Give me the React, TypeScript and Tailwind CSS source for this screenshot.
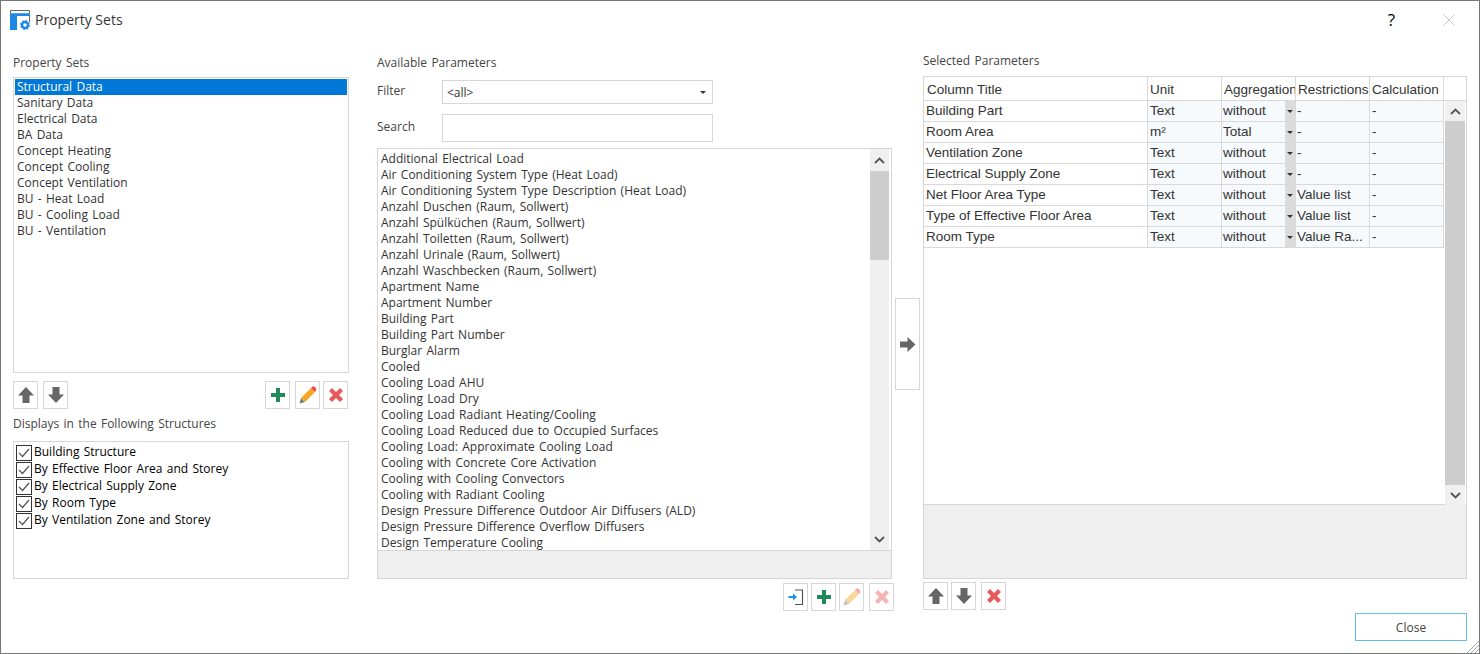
import type { ReactNode } from "react"

const propertySets = [
  "Sanitary Data",
  "Electrical Data",
  "BA Data",
  "Concept Heating",
  "Concept Cooling",
  "Concept Ventilation",
  "BU - Heat Load",
  "BU - Cooling Load",
  "BU - Ventilation",
]

const structures = [
  "Building Structure",
  "By Effective Floor Area and Storey",
  "By Electrical Supply Zone",
  "By Room Type",
  "By Ventilation Zone and Storey",
]

const parameters = [
  "Additional Electrical Load",
  "Air Conditioning System Type (Heat Load)",
  "Air Conditioning System Type Description (Heat Load)",
  "Anzahl Duschen (Raum, Sollwert)",
  "Anzahl Spülküchen (Raum, Sollwert)",
  "Anzahl Toiletten (Raum, Sollwert)",
  "Anzahl Urinale (Raum, Sollwert)",
  "Anzahl Waschbecken (Raum, Sollwert)",
  "Apartment Name",
  "Apartment Number",
  "Building Part",
  "Building Part Number",
  "Burglar Alarm",
  "Cooled",
  "Cooling Load AHU",
  "Cooling Load Dry",
  "Cooling Load Radiant Heating/Cooling",
  "Cooling Load Reduced due to Occupied Surfaces",
  "Cooling Load: Approximate Cooling Load",
  "Cooling with Concrete Core Activation",
  "Cooling with Cooling Convectors",
  "Cooling with Radiant Cooling",
  "Design Pressure Difference Outdoor Air Diffusers (ALD)",
  "Design Pressure Difference Overflow Diffusers",
  "Design Temperature Cooling",
]

const rows = [
  ["Building Part", "Text", "without", "-"],
  ["Room Area", "m²", "Total", "-"],
  ["Ventilation Zone", "Text", "without", "-"],
  ["Electrical Supply Zone", "Text", "without", "-"],
  ["Net Floor Area Type", "Text", "without", "Value list"],
  ["Type of Effective Floor Area", "Text", "without", "Value list"],
  ["Room Type", "Text", "without", "Value Ra..."],
]

const ArrowUp = () => (
  <svg width="20" height="20" viewBox="0 0 20 20">
    <path d="M10 2 L18 10.5 H13.5 V18 H6.5 V10.5 H2 Z" fill="#666" />
  </svg>
)

const ArrowDown = () => (
  <svg width="20" height="20" viewBox="0 0 20 20">
    <path d="M10 18 L18 9.5 H13.5 V2 H6.5 V9.5 H2 Z" fill="#666" />
  </svg>
)

const Plus = () => (
  <svg width="16" height="16" viewBox="0 0 16 16">
    <path d="M6 1 H10 V6 H15 V10 H10 V15 H6 V10 H1 V6 H6 Z" fill="#1f8a5a" />
  </svg>
)

const Cross = () => (
  <svg width="16" height="16" viewBox="0 0 16 16">
    <path d="M1 4 L4 1 L8 5 L12 1 L15 4 L11 8 L15 12 L12 15 L8 11 L4 15 L1 12 L5 8 Z" fill="#e85a5a" />
  </svg>
)

const Pencil = () => (
  <svg width="18" height="18" viewBox="0 0 18 18">
    <path d="M0.5 17.5 L2 12 L6 16 Z" fill="#777" />
    <path d="M2 12 L12 2 L16 6 L6 16 Z" fill="#f5a623" />
    <path d="M12 2 L13.5 0.5 Q14.5 0 15.5 0.8 L17 2.4 Q17.6 3.4 17 4.4 L16 6 Z" fill="#f0434f" />
  </svg>
)

const Insert = () => (
  <svg width="18" height="18" viewBox="0 0 18 18">
    <path d="M8 2 H15.5 V16.5 H8" fill="none" stroke="#555" strokeWidth="1.2" />
    <path d="M1.5 8 H6 V5.5 L10 9 L6 12.5 V10 H1.5 Z" fill="#1e90e8" />
  </svg>
)

const Chevron = ({ up }: { up?: boolean }) => (
  <svg width="11" height="7" viewBox="0 0 11 7">
    <path d={up ? "M1 6 L5.5 1.5 L10 6" : "M1 1 L5.5 5.5 L10 1"} fill="none" stroke="#555" strokeWidth="1.8" />
  </svg>
)

const Caret = () => (
  <svg width="6" height="3" viewBox="0 0 6 3">
    <path d="M0 0 H6 L3 3 Z" fill="#333" />
  </svg>
)

const IconButton = ({ children, faded }: { children: ReactNode; faded?: boolean }) => (
  <button className={`flex h-[28px] w-[25px] shrink-0 items-center justify-center border border-[#d6d6d6] bg-white ${faded ? "[&>svg]:opacity-45" : ""}`}>
    {children}
  </button>
)

const Scrollbar = ({ arrow, thumbHeight, width }: { arrow: string; thumbHeight: string; width: string }) => (
  <div className={`flex h-full shrink-0 flex-col ${width}`}>
    <div className={`flex shrink-0 items-center justify-center bg-[#f0f0f0] ${arrow}`}>
      <Chevron up />
    </div>
    <div className="flex flex-1 flex-col bg-[#f0f0f0]">
      <div className={`bg-[#cdcdcd] ${thumbHeight}`} />
    </div>
    <div className={`flex shrink-0 items-center justify-center bg-[#f0f0f0] ${arrow}`}>
      <Chevron />
    </div>
  </div>
)

function PropertySetsColumn() {
  return (
    <div className="flex w-[336px] shrink-0 flex-col">
      <div className="h-[22px] text-[12px] leading-[16px] text-[#444]">Property Sets</div>
      <div className="h-[296px] border border-[#d6d6d6] bg-white p-px">
        <div className="h-[16px] bg-[#0078d7] pl-[2px] text-[12px] leading-[16px] text-white">Structural Data</div>
        {propertySets.map((s) => (
          <div key={s} className="h-[16px] pl-[2px] text-[12px] leading-[16px] text-[#333]">
            {s}
          </div>
        ))}
      </div>
      <div className="mt-[8px] flex h-[28px]">
        <IconButton><ArrowUp /></IconButton>
        <div className="ml-[5px]"><IconButton><ArrowDown /></IconButton></div>
        <div className="ml-[197px]"><IconButton><Plus /></IconButton></div>
        <div className="ml-[5px]"><IconButton><Pencil /></IconButton></div>
        <div className="ml-[3px]"><IconButton><Cross /></IconButton></div>
      </div>
      <div className="mt-[7px] h-[25px] text-[12px] leading-[16px] text-[#444]">Displays in the Following Structures</div>
      <div className="h-[138px] border border-[#d6d6d6] bg-white pt-[2px] pl-[2px]">
        {structures.map((s) => (
          <div key={s} className="flex h-[17px] items-center gap-[2px] text-[12px] text-black">
            <span className="flex h-[16px] w-[16px] items-center justify-center border border-[#333]">
              <svg width="12" height="10" viewBox="0 0 12 10">
                <path d="M1 5 L4.5 8.5 L11 1" fill="none" stroke="#555" strokeWidth="1.2" />
              </svg>
            </span>
            <span className="-mt-[2px]">{s}</span>
          </div>
        ))}
      </div>
    </div>
  )
}

function AvailableColumn() {
  return (
    <div className="flex w-[515px] shrink-0 flex-col">
      <div className="h-[25px] text-[12px] leading-[16px] text-[#444]">Available Parameters</div>
      <div className="flex h-[24px] items-start">
        <span className="w-[65px] text-[12px] leading-[22px] text-[#444]">Filter</span>
        <div className="flex h-[24px] w-[271px] items-center justify-between border border-[#d6d6d6] pt-[2px] pr-[6px] pl-[4px] text-[12px] text-[#333]">
          &lt;all&gt;
          <span className="-mt-[2px] flex"><Caret /></span>
        </div>
      </div>
      <div className="mt-[10px] flex h-[28px] items-start">
        <span className="w-[65px] text-[12px] leading-[26px] text-[#444]">Search</span>
        <div className="h-[28px] w-[271px] border border-[#d6d6d6]" />
      </div>
      <div className="mt-[6px] flex h-[403px] border border-[#d6d6d6] bg-white">
        <div className="min-w-0 flex-1 overflow-hidden pt-[2px] pl-[3px]">
          {parameters.map((p) => (
            <div key={p} className="h-[16px] whitespace-nowrap text-[12px] leading-[16px] text-[#333]">
              {p}
            </div>
          ))}
        </div>
        <Scrollbar width="w-[19px] mr-[2px]" arrow="h-[22px]" thumbHeight="h-[89px]" />
      </div>
      <div className="h-[28px] border-x border-b border-[#d6d6d6] bg-[#efefef]" />
      <div className="mt-[4px] -mr-[2px] flex h-[28px] justify-end">
        <IconButton><Insert /></IconButton>
        <div className="ml-[3px]"><IconButton><Plus /></IconButton></div>
        <div className="ml-[3px]"><IconButton faded><Pencil /></IconButton></div>
        <div className="ml-[5px]"><IconButton faded><Cross /></IconButton></div>
      </div>
    </div>
  )
}

function SelectedColumn() {
  const cell = "flex items-center border-r border-[#d9d9d9] px-[2px] overflow-hidden whitespace-nowrap"
  return (
    <div className="flex w-[544px] shrink-0 flex-col">
      <div className="h-[22px] text-[12px] leading-[14px] text-[#444]">Selected Parameters</div>
      <div className="flex h-[429px] flex-col border border-[#d6d6d6] bg-white font-['Liberation_Sans',sans-serif] text-[13.5px] text-[#333] [word-spacing:0]">
        <div className="grid h-[24px] shrink-0 grid-cols-[224px_74px_74px_74px_74px_1fr] border-b border-[#d9d9d9]">
          {["Column Title", "Unit", "Aggregation", "Restrictions", "Calculation"].map((h, i) => (
            <div key={h} className={`${cell} pt-[4px] ${i === 0 ? "pl-[3px]" : ""}`}>{h}</div>
          ))}
        </div>
        <div className="flex min-h-0 flex-1">
          <div className="w-[520px] shrink-0">
            {rows.map((r) => (
              <div key={r[0]} className="grid h-[21px] grid-cols-[224px_74px_74px_74px_74px] border-b border-[#d9d9d9]">
                <div className={cell}>{r[0]}</div>
                <div className={`${cell} bg-[#f6fafd]`}>{r[1]}</div>
                <div className="flex items-center justify-between border-r border-[#d9d9d9] bg-[#f6fafd] pl-[1px]">
                  <span>{r[2]}</span>
                  <span className="flex h-full w-[10px] items-center justify-center bg-[#dcdcdc]"><Caret /></span>
                </div>
                <div className={`${cell} bg-[#f6fafd] pl-[1px]`}>{r[3]}</div>
                <div className={`${cell} bg-[#f6fafd]`}>-</div>
              </div>
            ))}
          </div>
          <Scrollbar width="w-[20px] ml-[1px]" arrow="h-[20px]" thumbHeight="h-[364px]" />
        </div>
      </div>
      <div className="h-[74px] border-x border-b border-[#d6d6d6] bg-[#efefef]" />
      <div className="mt-[3px] flex h-[28px]">
        <IconButton><ArrowUp /></IconButton>
        <div className="ml-[3px]"><IconButton><ArrowDown /></IconButton></div>
        <div className="ml-[5px]"><IconButton><Cross /></IconButton></div>
      </div>
    </div>
  )
}

export default function App() {
  return (
    <div className="relative flex h-[654px] w-[1480px] flex-col overflow-hidden border border-[#777] bg-white font-['Open_Sans',sans-serif] [word-spacing:1.2px]">
      <div className="flex h-[37px] shrink-0 items-center pl-[9px] [word-spacing:0]">
        <svg width="20" height="20" viewBox="0 0 20 20">
          <path d="M0.5 0.5 H19.5 V12" fill="none" stroke="#666" />
          <path d="M0 0 V20 H10 V6 H20 V3.5 H0 Z" fill="#1e88e5" />
          <path d="M0 3.5 H20 V6 H7 V20 H0 Z" fill="#1e88e5" />
          <path d="M0.5 0.5 V3.5" stroke="#666" />
          <path d="M10 6 H7 V20 H10 Z" fill="#fff" />
          <circle cx="15" cy="15" r="5" fill="#fff" />
          <circle cx="15" cy="15" r="3" fill="none" stroke="#1e88e5" strokeWidth="2.4" />
          <circle cx="15" cy="15" r="4.4" fill="none" stroke="#1e88e5" strokeWidth="1.2" strokeDasharray="1.7 1.75" />
        </svg>
        <span className="ml-[5px] text-[14px] text-[#333]">Property Sets</span>
        <span className="mr-[48px] ml-auto text-[17px] leading-none text-black">?</span>
        <svg className="mr-[24px]" width="12" height="12" viewBox="0 0 12 12">
          <path d="M0.5 0.5 L11.5 11.5 M11.5 0.5 L0.5 11.5" stroke="#c8c8c8" strokeWidth="1" />
        </svg>
      </div>
      <div className="flex items-start pl-[12px]">
        <div className="mt-[17px]"><PropertySetsColumn /></div>
        <div className="mt-[17px] ml-[28px]"><AvailableColumn /></div>
        <button className="mt-[260px] ml-[3px] flex h-[92px] w-[25px] shrink-0 items-center justify-center border border-[#d6d6d6] bg-white">
          <svg width="17" height="17" viewBox="0 0 17 17">
            <path d="M1 5.5 H8.5 V1 L16.5 8.5 L8.5 16 V11.5 H1 Z" fill="#666" />
          </svg>
        </button>
        <div className="mt-[16px] ml-[3px]"><SelectedColumn /></div>
      </div>
      <div className="mt-[2px] flex justify-end pr-[12px]">
        <button className="h-[28px] w-[112px] border border-[#64bde8] bg-white pt-[2px] text-[12px] text-[#444]">Close</button>
      </div>
      <svg className="absolute right-0 bottom-0" width="12" height="12" viewBox="0 0 12 12">
        <path d="M0 12 L12 0 M4 12 L12 4 M8 12 L12 8" stroke="#aaa" strokeWidth="1" />
      </svg>
    </div>
  )
}
